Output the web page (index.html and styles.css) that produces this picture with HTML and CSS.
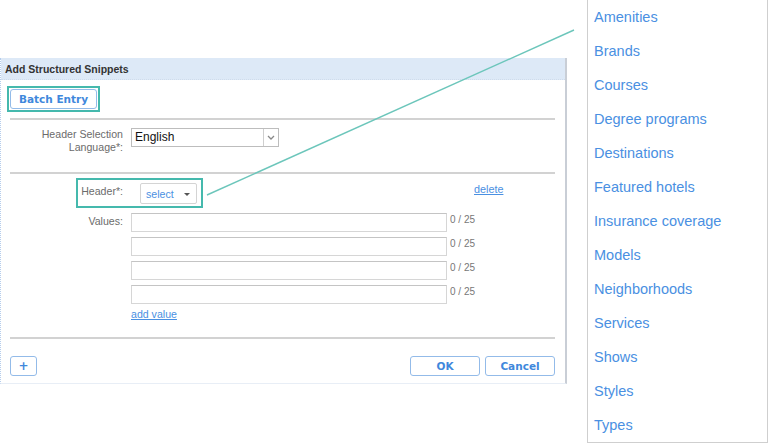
FILE: index.html
```html
<!DOCTYPE html>
<html lang="en">
<head>
    <meta charset="UTF-8">
    <meta name="viewport" content="width=device-width, initial-scale=1.0">
    <title>Add Structured Snippets</title>
    <link rel="stylesheet" href="styles.css">
</head>
<body>
    <div class="stage">
        <div class="dialog">
            <div class="dialog-title">Add Structured Snippets</div>

            <div class="batch-row">
                <span class="highlight batch-highlight">
                    <button class="btn btn-batch">Batch Entry</button>
                </span>
            </div>

            <div class="divider divider-batch"></div>

            <div class="form-row lang-row">
                <label class="field-label">Header Selection<br>Language*:</label>
                <div class="lang-select">
                    <span class="lang-value">English</span>
                    <span class="lang-arrow">
                        <svg width="8" height="5" viewBox="0 0 8 5"><path d="M1 1 L4 4 L7 1" fill="none" stroke="#888" stroke-width="1.3"/></svg>
                    </span>
                </div>
            </div>

            <div class="divider divider-lang"></div>

            <div class="header-row">
                <div class="highlight header-highlight">
                    <span class="header-label">Header*:</span>
                    <span class="select-btn">select <span class="caret"></span></span>
                </div>
                <a class="link delete-link" href="#">delete</a>
            </div>

            <div class="form-row values-row">
                <label class="field-label values-label">Values:</label>
                <div class="values">
                    <div class="value-line"><input class="value-input" type="text"><span class="counter">0 / 25</span></div>
                    <div class="value-line"><input class="value-input" type="text"><span class="counter">0 / 25</span></div>
                    <div class="value-line"><input class="value-input" type="text"><span class="counter">0 / 25</span></div>
                    <div class="value-line"><input class="value-input" type="text"><span class="counter">0 / 25</span></div>
                    <a class="link add-link" href="#">add value</a>
                </div>
            </div>

            <div class="divider divider-values"></div>

            <div class="footer">
                <button class="btn btn-plus">+</button>
                <div class="footer-actions">
                    <button class="btn btn-action">OK</button>
                    <button class="btn btn-action">Cancel</button>
                </div>
            </div>
        </div>

        <ul class="header-list">
            <li>Amenities</li>
            <li>Brands</li>
            <li>Courses</li>
            <li>Degree programs</li>
            <li>Destinations</li>
            <li>Featured hotels</li>
            <li>Insurance coverage</li>
            <li>Models</li>
            <li>Neighborhoods</li>
            <li>Services</li>
            <li>Shows</li>
            <li>Styles</li>
            <li>Types</li>
        </ul>

        <!-- callout line from the header select to the list -->
        <svg class="connector" width="768" height="444" viewBox="0 0 768 444">
            <line x1="207" y1="195" x2="574" y2="30" stroke="#6cc6bb" stroke-width="1.4"/>
        </svg>
    </div>
</body>
</html>
```

FILE: styles.css
```css
body {
    margin: 0;
    font-family: "Liberation Sans", Arial, sans-serif;
    background: #fff;
}

.stage {
    position: relative;
    display: flex;
    align-items: flex-start;
    width: 768px;
    height: 444px;
    overflow: hidden;
}

/* dialog */

.dialog {
    box-sizing: border-box;
    width: 567px;
    margin-top: 58px;
    padding-bottom: 7px;
    border-left: 1px dotted #b5cdec;
    border-right: 2px solid #c9ced6;
    border-bottom: 1px solid #e8eef6;
}

.dialog-title {
    height: 22px;
    line-height: 23px;
    padding-left: 4px;
    background: #dde9f7;
    border-bottom: 1px dotted #cfdcec;
    box-sizing: border-box;
    font-size: 10.5px;
    font-weight: bold;
    color: #333;
}

.highlight {
    border: 2px solid #45b9ad;
}

.batch-row {
    padding: 6px 0 0 6px;
}

.batch-highlight {
    display: inline-block;
    padding: 1px;
}

.btn {
    box-sizing: border-box;
    height: 20px;
    padding: 0;
    border: 1px solid #93bbe9;
    border-radius: 3px;
    background: #fff;
    color: #3f88dc;
    font-family: "DejaVu Sans", Verdana, sans-serif;
    font-size: 10.5px;
    font-weight: bold;
    cursor: pointer;
}

.btn-batch {
    display: block;
    width: 87px;
}

.divider {
    width: 545px;
    height: 2px;
    margin: 4px 0 0 9px;
    background: #d2d2d2;
}

.divider-batch {
    margin-top: 6px;
}

.divider-lang {
    margin-top: 18px;
}

.divider-values {
    margin-top: 16px;
}

/* label column + control column */

.form-row {
    display: grid;
    grid-template-columns: 122px 1fr;
    column-gap: 8px;
    align-items: start;
}

.field-label {
    text-align: right;
    font-size: 10.6px;
    line-height: 13px;
    color: #6b6b6b;
}

.lang-row {
    margin-top: 8px;
}

.lang-select {
    box-sizing: border-box;
    display: flex;
    width: 148px;
    height: 19px;
    border: 1px solid #bdbdbd;
}

.lang-value {
    flex: 1;
    padding-left: 3px;
    font-size: 12px;
    line-height: 17px;
    color: #111;
}

.lang-arrow {
    display: flex;
    align-items: center;
    justify-content: center;
    width: 14px;
    border-left: 1px solid #cfcfcf;
}

/* header select row */

.header-row {
    display: flex;
    align-items: flex-start;
    margin: 4px 0 0 75px;
}

.header-highlight {
    display: flex;
    align-items: flex-start;
    padding: 3px 4px 2px 0;
}

.header-label {
    width: 45px;
    margin-right: 17px;
    text-align: right;
    font-size: 10.6px;
    line-height: 16px;
    color: #6b6b6b;
}

.select-btn {
    box-sizing: border-box;
    display: flex;
    align-items: center;
    width: 57px;
    height: 21px;
    padding-left: 5px;
    border: 1px solid #d4d4d4;
    border-radius: 2px;
    font-size: 10.6px;
    color: #4a90e2;
}

.caret {
    width: 0;
    height: 0;
    margin-left: 10px;
    margin-top: 2px;
    border-left: 3.5px solid transparent;
    border-right: 3.5px solid transparent;
    border-top: 3.5px solid #555;
}

.link {
    color: #4a90e2;
    font-size: 10.8px;
}

.delete-link {
    margin-left: 271px;
    margin-top: 5px;
}

/* values */

.values-row {
    margin-top: 5px;
}

.values-label {
    line-height: 17px;
}

.values {
    display: flex;
    flex-direction: column;
    align-items: flex-start;
    gap: 5px;
}

.value-line {
    display: flex;
    align-items: flex-start;
}

.value-input {
    box-sizing: border-box;
    width: 316px;
    height: 19px;
    margin: 0;
    border: 1px solid #d6d6d6;
    border-top-color: #c4c4c4;
}

.counter {
    margin-left: 3px;
    font-size: 10px;
    line-height: 13px;
    color: #777;
}

.add-link {
    margin-top: -2px;
    font-size: 10.6px;
    line-height: 14px;
}

/* footer buttons */

.footer {
    display: flex;
    justify-content: space-between;
    width: 545px;
    margin: 17px 0 0 9px;
}

.btn-plus {
    width: 27px;
    font-size: 12px;
}

.footer-actions {
    display: flex;
    gap: 5px;
}

.btn-action {
    width: 70px;
}

/* header type list */

.header-list {
    box-sizing: border-box;
    width: 181px;
    height: 444px;
    margin: -1px 0 0 20px;
    padding: 0 0 0 6px;
    list-style: none;
    border: 1px solid #cfcfcf;
    font-size: 14.5px;
    line-height: 34px;
    color: #4a90e2;
}

.connector {
    position: absolute;
    top: 0;
    left: 0;
    pointer-events: none;
}
```
